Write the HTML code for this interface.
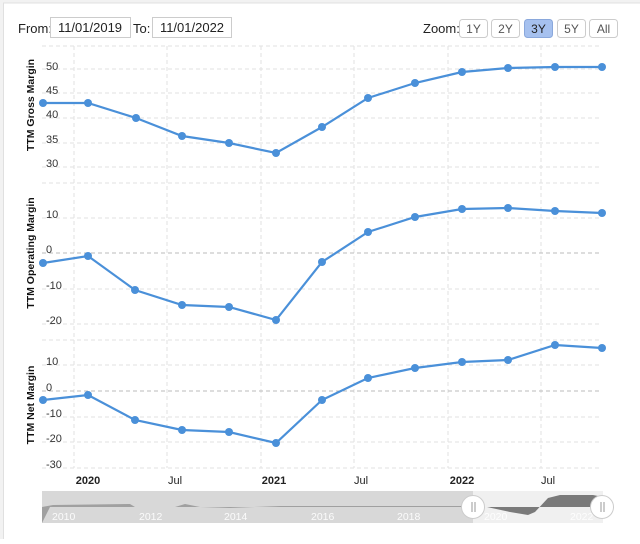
<!DOCTYPE html>
<html><head><style>
body{margin:0;background:#fff;width:640px;height:539px;overflow:hidden;font-family:"Liberation Sans",sans-serif;}
</style></head><body>
<svg width="640" height="539" viewBox="0 0 640 539" xmlns="http://www.w3.org/2000/svg" font-family="Liberation Sans, sans-serif">
<rect x="0" y="0" width="640" height="539" fill="#f2f2f2"/>
<rect x="3.5" y="3" width="640" height="540" fill="#fff" stroke="#e0e0e0"/>
<!-- header -->
<text x="18" y="33" font-size="13" fill="#222">From:</text>
<rect x="50.5" y="17.5" width="80" height="20" fill="#fff" stroke="#ccc"/>
<text x="90" y="32" font-size="13" fill="#222" text-anchor="middle">11/01/2019</text>
<text x="133" y="33" font-size="13" fill="#222">To:</text>
<rect x="152.5" y="17.5" width="79" height="20" fill="#fff" stroke="#ccc"/>
<text x="192" y="32" font-size="13" fill="#222" text-anchor="middle">11/01/2022</text>
<text x="423" y="33" font-size="13" fill="#222">Zoom:</text>
<g font-size="12" text-anchor="middle" fill="#555">
<rect x="459.5" y="19.5" width="28" height="18" rx="3" fill="#fff" stroke="#ccc"/><text x="473.5" y="33">1Y</text>
<rect x="491.5" y="19.5" width="28" height="18" rx="3" fill="#fff" stroke="#ccc"/><text x="505.5" y="33">2Y</text>
<rect x="524.5" y="19.5" width="28" height="18" rx="3" fill="#a6c1ef" stroke="#8aa8dc"/><text x="538.5" y="33" fill="#222">3Y</text>
<rect x="557.5" y="19.5" width="28" height="18" rx="3" fill="#fff" stroke="#ccc"/><text x="571.5" y="33">5Y</text>
<rect x="589.5" y="19.5" width="28" height="18" rx="3" fill="#fff" stroke="#ccc"/><text x="603.5" y="33">All</text>
</g>
<!-- grid -->
<g stroke="#e2e2e2" stroke-dasharray="4,3" stroke-width="1">
<line x1="74" y1="46" x2="74" y2="468"/><line x1="167" y1="46" x2="167" y2="468"/><line x1="261" y1="46" x2="261" y2="468"/>
<line x1="354" y1="46" x2="354" y2="468"/><line x1="448" y1="46" x2="448" y2="468"/><line x1="541" y1="46" x2="541" y2="468"/>
<line x1="42" y1="46" x2="600" y2="46"/><line x1="42" y1="69" x2="600" y2="69"/><line x1="42" y1="93" x2="600" y2="93"/>
<line x1="42" y1="118" x2="600" y2="118"/><line x1="42" y1="143" x2="600" y2="143"/><line x1="42" y1="167" x2="600" y2="167"/>
<line x1="42" y1="183" x2="600" y2="183"/><line x1="42" y1="218" x2="600" y2="218"/><line x1="42" y1="289" x2="600" y2="289"/>
<line x1="42" y1="324" x2="600" y2="324"/><line x1="42" y1="340" x2="600" y2="340"/><line x1="42" y1="365" x2="600" y2="365"/>
<line x1="42" y1="417" x2="600" y2="417"/><line x1="42" y1="442" x2="600" y2="442"/><line x1="42" y1="468" x2="600" y2="468"/>
</g>
<g stroke="#bbb" stroke-dasharray="4,3"><line x1="42" y1="253" x2="600" y2="253"/><line x1="42" y1="391" x2="600" y2="391"/></g>
<!-- y labels -->
<g font-size="11" fill="#333">
<text x="46" y="70">50</text><text x="46" y="94">45</text><text x="46" y="118">40</text><text x="46" y="143">35</text><text x="46" y="167">30</text>
<text x="46" y="218">10</text><text x="46" y="253">0</text><text x="46" y="289">-10</text><text x="46" y="324">-20</text>
<text x="46" y="365">10</text><text x="46" y="391">0</text><text x="46" y="417">-10</text><text x="46" y="442">-20</text><text x="46" y="468">-30</text>
</g>
<g font-size="10.5" font-weight="bold" fill="#111" text-anchor="middle">
<text transform="translate(34,105) rotate(-90)">TTM Gross Margin</text>
<text transform="translate(34,253) rotate(-90)">TTM Operating Margin</text>
<text transform="translate(34,405) rotate(-90)">TTM Net Margin</text>
</g>
<!-- series -->
<g fill="none" stroke="#4a90d9" stroke-width="2.2">
<polyline points="43,103 88,103 136,118 182,136 229,143 276,153 322,127 368,98 415,83 462,72 508,68 555,67 602,67"/>
<polyline points="43,263 88,256 135,290 182,305 229,307 276,320 322,262 368,232 415,217 462,209 508,208 555,211 602,213"/>
<polyline points="43,400 88,395 135,420 182,430 229,432 276,443 322,400 368,378 415,368 462,362 508,360 555,345 602,348"/>
</g>
<g fill="#4a90d9">
<circle cx="43" cy="103" r="4"/><circle cx="88" cy="103" r="4"/><circle cx="136" cy="118" r="4"/><circle cx="182" cy="136" r="4"/><circle cx="229" cy="143" r="4"/><circle cx="276" cy="153" r="4"/><circle cx="322" cy="127" r="4"/><circle cx="368" cy="98" r="4"/><circle cx="415" cy="83" r="4"/><circle cx="462" cy="72" r="4"/><circle cx="508" cy="68" r="4"/><circle cx="555" cy="67" r="4"/><circle cx="602" cy="67" r="4"/>
<circle cx="43" cy="263" r="4"/><circle cx="88" cy="256" r="4"/><circle cx="135" cy="290" r="4"/><circle cx="182" cy="305" r="4"/><circle cx="229" cy="307" r="4"/><circle cx="276" cy="320" r="4"/><circle cx="322" cy="262" r="4"/><circle cx="368" cy="232" r="4"/><circle cx="415" cy="217" r="4"/><circle cx="462" cy="209" r="4"/><circle cx="508" cy="208" r="4"/><circle cx="555" cy="211" r="4"/><circle cx="602" cy="213" r="4"/>
<circle cx="43" cy="400" r="4"/><circle cx="88" cy="395" r="4"/><circle cx="135" cy="420" r="4"/><circle cx="182" cy="430" r="4"/><circle cx="229" cy="432" r="4"/><circle cx="276" cy="443" r="4"/><circle cx="322" cy="400" r="4"/><circle cx="368" cy="378" r="4"/><circle cx="415" cy="368" r="4"/><circle cx="462" cy="362" r="4"/><circle cx="508" cy="360" r="4"/><circle cx="555" cy="345" r="4"/><circle cx="602" cy="348" r="4"/>
</g>
<!-- x labels -->
<g font-size="11" fill="#222" text-anchor="middle">
<text x="88" y="484" font-weight="bold">2020</text><text x="175" y="484">Jul</text><text x="274" y="484" font-weight="bold">2021</text>
<text x="361" y="484">Jul</text><text x="462" y="484" font-weight="bold">2022</text><text x="548" y="484">Jul</text>
</g>
<!-- navigator -->
<rect x="42" y="491" width="561" height="32" fill="#d8d8d8"/>
<rect x="473" y="491" width="130" height="32" fill="#f0f0f0"/>
<path d="M42,507 L53,505 L130,504 L135,507 L175,507 L185,504 L200,507 L230,508 L280,506 L473,506 L473,507 L42,507Z" fill="#a0a0a0"/>
<path d="M42,507 L42,523 L50,507Z" fill="#a0a0a0"/>
<path d="M487,507 L510,512 L528,515 L535,512 L548,498 L560,495 L593,495 L603,497 L603,507Z" fill="#7a7a7a"/>
<g font-size="10.5" fill="#fff" opacity="0.9">
<text x="52" y="520">2010</text><text x="139" y="520">2012</text><text x="224" y="520">2014</text><text x="311" y="520">2016</text><text x="397" y="520">2018</text><text x="484" y="520">2020</text><text x="570" y="520">2022</text>
</g>
<g stroke="#ccc"><circle cx="473" cy="507" r="11.5" fill="#fff"/><circle cx="602" cy="507" r="11.5" fill="#fff"/></g>
<g stroke="#999"><line x1="472" y1="502" x2="472" y2="512"/><line x1="475" y1="502" x2="475" y2="512"/><line x1="601" y1="502" x2="601" y2="512"/><line x1="604" y1="502" x2="604" y2="512"/></g>
</svg>
</body></html>
